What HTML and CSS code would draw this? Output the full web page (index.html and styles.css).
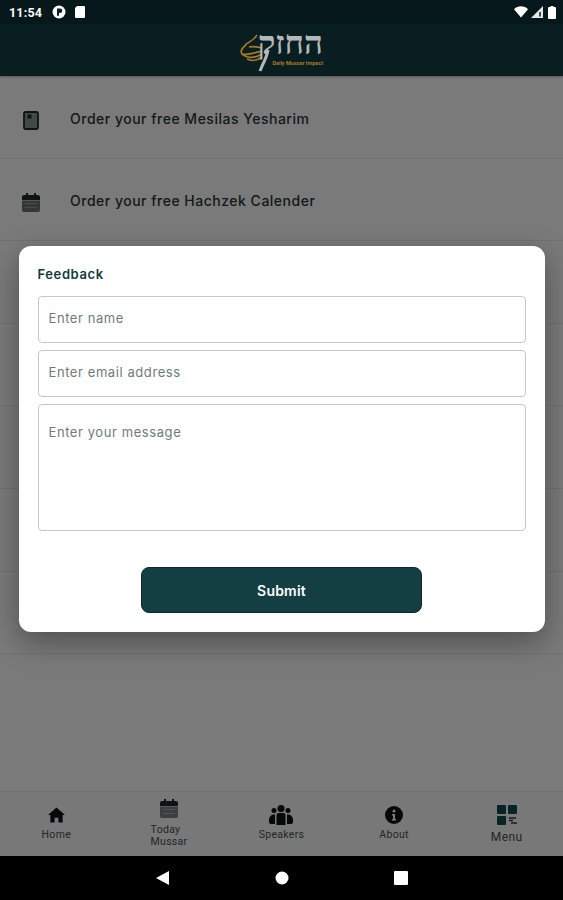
FILE: index.html
```html
<!DOCTYPE html>
<html lang="en">
<head>
<meta charset="utf-8">
<title>Feedback</title>
<link rel="stylesheet" href="styles.css">
</head>
<body>
<div class="device">
  <div class="status">
    <span class="time">11:54</span>
    <svg class="st-p" viewBox="0 0 14 14" width="14" height="14"><circle cx="7" cy="7" r="6.500" fill="#fff"/><path d="M5 3.500h3a2.300 2.300 0 0 1 0 4.600H7v2.600H5z" fill="#0a2226"/></svg>
    <svg class="st-sd" viewBox="0 0 12 14" width="12" height="14"><path d="M3 1h7a1 1 0 0 1 1 1v10a1 1 0 0 1-1 1H2a1 1 0 0 1-1-1V3z" fill="#fff"/></svg>
    <span class="spacer"></span>
    <svg class="st-wifi" viewBox="0 0 14 12" width="14" height="12"><path d="M0 3.200C4-.6 10-.6 14 3.200L7 11.500z" fill="#fff"/></svg>
    <svg class="st-signal" viewBox="0 0 12 12" width="12" height="12"><path d="M12 0v12H0z" fill="#e6e6e6"/><path d="M8 6h2v4.500H8z" fill="#3a4a4c"/></svg>
    <svg class="st-batt" viewBox="0 0 8 13" width="8" height="13"><path d="M2.500 0h3v1H7a1 1 0 0 1 1 1v10a1 1 0 0 1-1 1H1a1 1 0 0 1-1-1V2a1 1 0 0 1 1-1h1.500z" fill="#fff"/></svg>
  </div>

  <div class="app">
    <header class="topbar">
      <div class="logo">
        <svg class="logo-tree" viewBox="0 0 30 42" width="30" height="42" fill="none">
          <path d="M17 5C14 10 9 12 5 15" stroke="#a87a26" stroke-width="1.500"/>
          <path d="M6 15C2 18 0 21 2 24c3 1 9 0 20-3M2 24c4 4 12 5 20 0M7 29c4 2 10 2 15-2M9 17c4-1 9 0 13 1" stroke="#a87a26" stroke-width="1.700"/>
          <path d="M28 20c-1 6-3 10-5 14l-3 7" stroke="#b5b8b8" stroke-width="3"/>
        </svg>
        <div class="logo-text">
          <span class="logo-he" lang="he" dir="rtl">החזק</span>
          <span class="logo-sub">Daily Mussar Impact</span>
        </div>
      </div>
    </header>

    <ul class="list">
      <li class="row">
        <span class="row-icon">
          <svg viewBox="0 0 16 19" width="16" height="19" fill="none"><rect x="1" y="1" width="14" height="17" rx="1.500" fill="#8f9696" stroke="#222b2c" stroke-width="1.800"/><rect x="4.500" y="3.500" width="4" height="4" fill="#222b2c"/></svg>
        </span>
        <span class="row-label">Order your free Mesilas Yesharim</span>
      </li>
      <li class="row">
        <span class="row-icon">
          <svg viewBox="0 0 18 19" width="18" height="19"><path d="M4 0h2v2h6V0h2v2h2a2 2 0 0 1 2 2v3H0V4a2 2 0 0 1 2-2h2z" fill="#1f2a2b"/><path d="M0 7.500h18V17a2 2 0 0 1-2 2H2a2 2 0 0 1-2-2z" fill="#6a7374"/><path d="M3 10.500h12M3 14.500h12" stroke="#9aa0a0" stroke-width="1.200"/></svg>
        </span>
        <span class="row-label">Order your free Hachzek Calender</span>
      </li>
      <li class="row"></li>
      <li class="row"></li>
      <li class="row"></li>
      <li class="row"></li>
      <li class="row"></li>
    </ul>

    <nav class="tabs">
      <a class="tab">
        <span class="tab-icon"><svg viewBox="0 0 18 16" width="17" height="16"><path d="M9 0l9 8h-2.500v8H11v-5H7v5H2.500V8H0z" fill="#0d1416"/></svg></span>
        <span class="tab-label">Home</span>
      </a>
      <a class="tab tab-cal">
        <span class="tab-icon"><svg viewBox="0 0 18 19" width="18" height="19"><path d="M4 0h2v2h6V0h2v2h2a2 2 0 0 1 2 2v3H0V4a2 2 0 0 1 2-2h2z" fill="#1f2a2b"/><path d="M0 7.500h18V17a2 2 0 0 1-2 2H2a2 2 0 0 1-2-2z" fill="#7a8283"/><path d="M3 10.500h12M3 14.500h12" stroke="#a8adad" stroke-width="1.200"/></svg></span>
        <span class="tab-label">Today<br>Mussar</span>
      </a>
      <a class="tab">
        <span class="tab-icon"><svg viewBox="0 0 24 20" width="24" height="20" fill="#0d1416"><circle cx="12" cy="3.500" r="3.500"/><circle cx="5" cy="5.500" r="2.500"/><circle cx="19" cy="5.500" r="2.500"/><path d="M7.500 10a2 2 0 0 1 2-2h5a2 2 0 0 1 2 2v10h-9z"/><path d="M6 9.500C2 9 0 12 0 15v2a2 2 0 0 0 2 2h4z"/><path d="M18 9.500c4-.5 6 2.500 6 5.500v2a2 2 0 0 1-2 2h-4z"/></svg></span>
        <span class="tab-label">Speakers</span>
      </a>
      <a class="tab">
        <span class="tab-icon"><svg viewBox="0 0 18 18" width="18" height="18"><circle cx="9" cy="9" r="9" fill="#0d1416"/><circle cx="9" cy="5" r="1.500" fill="#fff"/><path d="M7 8h3v5h1v1.500H7V13h1V9.500H7z" fill="#fff"/></svg></span>
        <span class="tab-label">About</span>
      </a>
      <a class="tab tab-menu">
        <span class="tab-icon"><svg viewBox="0 0 20 20" width="20" height="20"><rect width="9" height="9" rx="1" fill="#0f4a4c"/><rect x="11" width="9" height="9" rx="1" fill="#0f4a4c"/><rect y="11" width="9" height="9" rx="1" fill="#0f4a4c"/><path d="M12 13h7M12 15.500h4M14 18h6" stroke="#2a3a3a" stroke-width="1.600"/></svg></span>
        <span class="tab-label">Menu</span>
      </a>
    </nav>

    <div class="overlay">
      <form class="modal">
        <h2 class="modal-title">Feedback</h2>
        <div class="field">Enter name</div>
        <div class="field">Enter email address</div>
        <div class="field field-area">Enter your message</div>
        <button class="submit" type="button">Submit</button>
      </form>
    </div>
  </div>

  <div class="sysnav">
    <svg viewBox="0 0 14 14" width="14" height="14"><path d="M13 0v14L0 7z" fill="#fff"/></svg>
    <svg viewBox="0 0 14 14" width="14" height="14"><circle cx="7" cy="7" r="6.500" fill="#fff"/></svg>
    <svg viewBox="0 0 14 14" width="14" height="14"><rect width="14" height="14" rx="1" fill="#fff"/></svg>
  </div>
</div>
</body>
</html>
```

FILE: styles.css
```css
* { box-sizing: border-box; }
html, body { margin: 0; padding: 0; }
body { width: 563px; height: 900px; overflow: hidden; font-family: Inter, "Noto Sans", sans-serif; background: #000; }
.device { display: flex; flex-direction: column; height: 900px; }

.status { flex: 0 0 24px; display: flex; align-items: center; padding: 0 7px 0 9px; background: #06181b; color: #fff; }
.time { font: 700 12.500px Roboto, sans-serif; letter-spacing: .2px; }
.st-p { margin-left: 10px; }
.st-sd { margin-left: 8px; }
.spacer { flex: 1; }
.st-signal { margin-left: 3px; }
.st-batt { margin-left: 5px; }

.app { position: relative; flex: 1; display: flex; flex-direction: column; background: #fff; overflow: hidden; }
.topbar { flex: 0 0 52px; display: flex; justify-content: center; align-items: center; background: #143f44; box-shadow: 0 1px 2px rgba(0,0,0,.3); }
.logo { position: relative; z-index: 3; display: flex; align-items: flex-start; margin-top: 2px; }
.logo-tree { flex: none; margin-right: -10px; }
.logo-text { display: flex; flex-direction: column; align-items: flex-end; width: 63px; }
.logo-he { font: 700 33px/26px "Liberation Serif", serif; color: #b5b8b8; }
.logo-sub { margin-top: 4px; font: 700 5.500px/6px Roboto, sans-serif; color: #a87a26; white-space: nowrap; }

.list { list-style: none; margin: 0; padding: 0; flex: 1; }
.row { height: 82.600px; padding-top: 3px; display: flex; align-items: center; border-bottom: 1px solid #ececec; color: #2b3536; }
.row-icon { flex: 0 0 61px; height: 19px; margin-top: 4px; display: flex; justify-content: center; }
.row-label { margin-left: 9px; font-size: 14px; font-weight: 500; letter-spacing: .5px; }

.tabs { flex: 0 0 65px; display: flex; border-top: 1px solid #eee; background: #fafafa; }
.tab { flex: 1; display: flex; flex-direction: column; align-items: center; padding-top: 13px; }
.tab-icon { height: 20px; display: flex; align-items: center; justify-content: center; }
.tab-label { margin-top: 4px; font: 400 10.500px/12px Roboto, sans-serif; letter-spacing: .3px; color: #4c5050; }
.tab-cal { padding-top: 6px; }
.tab-cal .tab-label { margin-top: 6px; align-self: flex-start; margin-left: 38px; }
.tab-menu .tab-label { margin-top: 5px; font-size: 12px; line-height: 14px; letter-spacing: .4px; }

.overlay { position: absolute; inset: 0; padding-bottom: 2px; display: flex; align-items: center; justify-content: center; background: rgba(0,0,0,.52); z-index: 2; }
.modal { width: 526px; height: 386px; display: flex; flex-direction: column; padding: 20px 19px 19px; background: #fff; border-radius: 12px; box-shadow: 0 10px 30px rgba(0,0,0,.35); }
.modal-title { margin: 0 0 14px; height: 16px; font-size: 13px; line-height: 16px; font-weight: 600; letter-spacing: .6px; color: #123b3d; }
.field { height: 47px; margin-bottom: 7px; padding: 13px 10px; border: 1.500px solid #c4c8c8; border-radius: 4px; font-size: 13px; line-height: 16px; letter-spacing: .58px; color: #6f7b7b; }
.field-area { height: 127px; padding-top: 19px; margin-bottom: 36px; }
.submit { align-self: center; width: 281px; height: 46px; border: 1px solid #0b2a2c; border-radius: 8px; background: #133f42; color: #fff; font: 600 14px Inter, sans-serif; letter-spacing: .2px; }

.sysnav { flex: 0 0 44px; display: flex; align-items: center; justify-content: center; gap: 105px; background: #000; }
```
